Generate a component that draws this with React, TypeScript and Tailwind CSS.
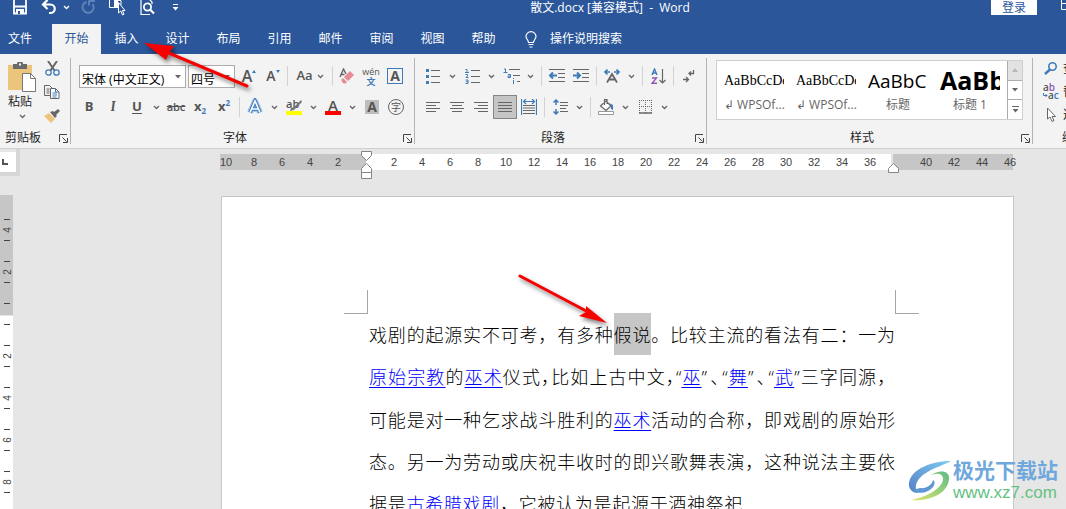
import type { ReactNode } from 'react';
import clsx from 'clsx';

const GRAY = '#666666';
const BLUE = '#3f7ab8';

/* ---------- small shared pieces ---------- */

function Svg({ w = 16, h = 16, children }: { w?: number; h?: number; children: ReactNode }) {
  return (
    <svg width={w} height={h} viewBox={`0 0 ${w} ${h}`} fill="none" stroke={GRAY} className="shrink-0" aria-hidden="true">
      {children}
    </svg>
  );
}

function Chevron({ color = '#666666' }: { color?: string }) {
  return (
    <Svg w={7} h={5}>
      <path d="M1 1l2.5 2.5L6 1" stroke={color} strokeWidth="1.3" />
    </Svg>
  );
}

function Tool({ label, className, children }: { label: string; className?: string; children: ReactNode }) {
  return (
    <button type="button" aria-label={label} className={clsx('flex h-6 shrink-0 items-center justify-center', className ?? 'w-6')}>
      {children}
    </button>
  );
}

function Drop({ label }: { label: string }) {
  return (
    <Tool label={label} className="w-[15px]">
      <Chevron />
    </Tool>
  );
}

function Sep({ tight = false }: { tight?: boolean }) {
  return <span className={clsx('h-5 w-px shrink-0 bg-[#d2d2d2]', tight ? 'mx-[2px]' : 'mx-[3px]')} />;
}

function Launcher({ label }: { label: string }) {
  return (
    <button type="button" aria-label={label} className="flex h-4 w-4 items-center justify-center">
      <Svg w={9} h={9}>
        <path d="M.5 8V.5H8M3.500 3.500l4 4M8.500 4v4.500H4" stroke="#444" />
      </Svg>
    </button>
  );
}

function Group({ title, className, children }: { title: string; className: string; children: ReactNode }) {
  return (
    <section className={clsx('relative flex flex-col', className)}>
      <div className="h-[75px] pt-[10px]">{children}</div>
      <div className="flex h-[18px] items-center">
        <h2 className="flex-1 text-center text-xs">{title}</h2>
        <Launcher label={`${title}设置`} />
      </div>
      <span className="absolute top-1 right-0 h-[86px] w-px bg-[#b4b4b4]" />
    </section>
  );
}

/* ---------- title bar ---------- */

function TitleBar() {
  return (
    <header className="flex h-6 items-start overflow-hidden text-xs text-white">
      <div className="flex h-[14px] items-center pl-2">
        <Tool label="保存">
          <Svg w={14} h={15}>
            <path d="M1 0v13.500h12V0M1 6.500h12" stroke="#fff" strokeWidth="1.800" />
            <path d="M3 9h8v5H3z" fill="#fff" stroke="none" />
            <path d="M5 11h2v3H5z" fill="#2b579a" stroke="none" />
          </Svg>
        </Tool>
        <Tool label="撤消" className="ml-[5px] w-6">
          <Svg w={16} h={15}>
            <path d="M2 4.500h7.500a4 4 0 010 8.500H8M6.500 0L2 4.500 6.500 9" stroke="#fff" strokeWidth="2.200" />
          </Svg>
        </Tool>
        <Tool label="撤消列表" className="w-[11px]">
          <Chevron color="#fff" />
        </Tool>
        <Tool label="恢复" className="w-8">
          <Svg w={15} h={15}>
            <path d="M5.500 2A5.500 5.500 0 1011.500 4M8 .5v5M8 1h6" stroke="#5f82b8" strokeWidth="2" />
          </Svg>
        </Tool>
        <Tool label="触摸/鼠标模式" className="w-[27px]">
          <Svg w={17} h={17}>
            <path d="M.5 0v8.500H5M5 1.500h7V6" stroke="#fff" />
            <path d="M5 2h4v7H5z" fill="#fff" stroke="none" />
            <path d="M9.500 3.500V14l2.300-2 1.700 4 1.500-.7-1.600-3.800H16z" fill="#2b579a" stroke="#fff" />
          </Svg>
        </Tool>
        <Tool label="打印预览" className="w-8">
          <Svg w={15} h={17}>
            <path d="M1 0v15.500h9M9 0l3 3v2" stroke="#fff" strokeWidth="1.200" />
            <circle cx="7.500" cy="8" r="3.600" stroke="#fff" strokeWidth="1.800" />
            <path d="M10 10.500l4 4" stroke="#fff" strokeWidth="2.200" />
          </Svg>
        </Tool>
        <Tool label="自定义快速访问工具栏">
          <Svg w={7} h={7}>
            <path d="M1 .5h5" stroke="#fff" />
            <path d="M.5 3h6l-3 3.500z" fill="#fff" stroke="none" />
          </Svg>
        </Tool>
      </div>
      <h1 className="flex-1 pl-[42px] text-center leading-4 whitespace-pre">散文.docx [兼容模式]  -  Word</h1>
      <button type="button" className="mr-6 h-[15px] w-[46px] shrink-0 bg-white leading-3 text-[#2b579a]">
        登录
      </button>
      <div className="w-[5px] overflow-hidden">
        <svg width="12" height="10" fill="none" stroke="#fff" aria-hidden="true">
          <path d="M.5 0v9.500H12M0 3.500h12" />
        </svg>
      </div>
    </header>
  );
}

/* ---------- tabs ---------- */

const tabs = ['插入', '设计', '布局', '引用', '邮件', '审阅', '视图', '帮助'];

function Tabs() {
  return (
    <nav className="flex h-[30px] items-stretch text-xs text-white">
      <button type="button" className="w-[52px] pl-2 text-left">文件</button>
      <button type="button" aria-current="page" className="w-[49px] bg-[#f3f3f3] text-[#2b579a]">开始</button>
      {tabs.map((tab) => (
        <button key={tab} type="button" className="w-[51px]">{tab}</button>
      ))}
      <button type="button" className="ml-4 flex items-center gap-[13px]">
        <Svg w={12} h={17}>
          <path d="M3.500 11.500C3.500 9 1 8 1 5.500a5 4.800 0 0110 0C11 8 8.500 9 8.500 11.500zM3.500 13.500h5M4.500 16h3" stroke="#fff" strokeWidth="1.200" />
        </Svg>
        操作说明搜索
      </button>
    </nav>
  );
}

/* ---------- ribbon groups ---------- */

function Clipboard() {
  return (
    <section className="relative flex w-[71px] shrink-0 flex-col">
      <div className="flex h-[75px]">
        <button type="button" className="flex w-10 flex-col items-center pt-2 text-xs">
          <span className="pl-1">
            <Svg w={28} h={30}>
              <path d="M0 3h24v25H0z" fill="#ecc57d" stroke="none" />
              <path d="M5 2h4a3 3 0 016 0h4v5H5z" fill="#6a6a6a" stroke="none" />
              <path d="M11 1.500h2v2h-2z" fill="#f3f3f3" stroke="none" />
              <path d="M14.500 11.500h8l5 5v13h-13z" fill="#fff" stroke="#777" />
              <path d="M22.500 11.500v5h5" stroke="#777" />
            </Svg>
          </span>
          <span className="mt-[2px] mb-1 leading-4">粘贴</span>
          <span className="pl-1"><Chevron /></span>
        </button>
        <div className="flex flex-col pt-[2px]">
          <Tool label="剪切">
            <Svg w={15} h={15}>
              <path d="M3 0l6.500 9.500M12 0L5.500 9.500" strokeWidth="2" />
              <circle cx="3.500" cy="11.500" r="2.700" stroke={BLUE} strokeWidth="1.300" />
              <circle cx="11.500" cy="11.500" r="2.700" stroke={BLUE} strokeWidth="1.300" />
            </Svg>
          </Tool>
          <Tool label="复制">
            <Svg w={16} h={14}>
              <path d="M6 10.500H.5V.5h5l3 3M2.500 4h3M2.500 6h3M2.500 8h3" />
              <path d="M6.500 3.500h5l3.500 3.500v6.500H6.500z" fill="#fff" />
              <path d="M11.500 3.500V7H15M8.500 8h4.500M8.500 10h4.500M8.500 12h4" stroke={BLUE} />
            </Svg>
          </Tool>
          <Tool label="格式刷">
            <Svg w={16} h={14}>
              <path d="M0 7l5-3 6 6-4 4z" fill="#ecc57d" stroke="none" />
              <path d="M6 3l3-1 1 1 4-3 2 2-4 4 1 1-2 2z" fill="#666" stroke="none" />
            </Svg>
          </Tool>
        </div>
      </div>
      <div className="flex h-[18px] items-center justify-between pl-[5px]">
        <h2 className="text-xs">剪贴板</h2>
        <Launcher label="剪贴板设置" />
      </div>
      <span className="absolute top-1 right-0 h-[86px] w-px bg-[#b4b4b4]" />
    </section>
  );
}

function Picker({ label, value, className }: { label: string; value: string; className: string }) {
  return (
    <div className={clsx('relative h-[23px] border border-[#ababab] bg-white', className)}>
      <select aria-label={label} className="h-full w-full appearance-none pl-[2px] text-xs outline-none">
        <option>{value}</option>
      </select>
      <svg width="6" height="4" className="pointer-events-none absolute top-[9px] right-1" aria-hidden="true">
        <path d="M0 0h6L3 3.500z" fill="#666" />
      </svg>
    </div>
  );
}

function FontGroup() {
  return (
    <Group title="字体" className="w-[344px] shrink-0">
      <div className="flex items-center pl-2 text-[#555]">
        <Picker label="字体" value="宋体 (中文正文)" className="w-[107px] text-black" />
        <Picker label="字号" value="四号" className="mr-[2px] ml-[2px] w-[47px] text-black" />
        <Tool label="增大字号">
          <span className="text-base leading-4 font-semibold">A</span>
          <Svg w={4} h={14}>
            <path d="M0 4l2-3 2 3z" fill={BLUE} stroke="none" />
          </Svg>
        </Tool>
        <Tool label="减小字号">
          <span className="text-sm leading-4 font-semibold">A</span>
          <Svg w={4} h={14}>
            <path d="M0 1h4L2 4z" fill={BLUE} stroke="none" />
          </Svg>
        </Tool>
        <Sep tight />
        <Tool label="更改大小写" className="w-10 gap-1">
          <span className="text-[13px] font-semibold">Aa</span>
          <Chevron />
        </Tool>
        <Sep tight />
        <Tool label="清除所有格式">
          <Svg w={16} h={16}>
            <path d="M1 9l3.500-8L7 6M2 6.500h3.500" strokeWidth="1.400" />
            <path d="M5 9l6-6 4 4-6 6z" fill="#e88a94" stroke="none" />
            <path d="M4 10l4 4-1.500 1.500h-2L2.500 13v-1.500z" fill="#e88a94" stroke="none" />
          </Svg>
        </Tool>
        <Tool label="拼音指南" className="w-6 flex-col">
          <span className="text-[9px] leading-3">wén</span>
          <span className="text-[9px] leading-2 font-bold text-[#3f7ab8]">文</span>
        </Tool>
        <Tool label="字符边框">
          <span className="flex h-4 w-4 items-center justify-center border border-[#3f7ab8] text-sm leading-4 font-bold">A</span>
        </Tool>
      </div>
      <div className="mt-[7px] flex items-center pl-[6px] text-[13px] text-[#555]">
        <Tool label="加粗"><b>B</b></Tool>
        <Tool label="倾斜"><i className="font-serif font-bold">I</i></Tool>
        <Tool label="下划线"><span className="font-bold underline underline-offset-2">U</span></Tool>
        <Drop label="下划线样式" />
        <Tool label="删除线"><span className="text-[11px] font-semibold line-through">abc</span></Tool>
        <Tool label="下标">
          <b>x</b>
          <span className="mt-2 text-[8px] font-bold text-[#3f7ab8]">2</span>
        </Tool>
        <Tool label="上标">
          <b>x</b>
          <span className="mb-2 text-[8px] font-bold text-[#3f7ab8]">2</span>
        </Tool>
        <Sep />
        <Tool label="文本效果">
          <Svg w={18} h={18}>
            <path d="M4 14.500L9 3l5 11.500M5.500 11h7" stroke="#a9c8ea" strokeWidth="6" strokeLinejoin="round" />
            <path d="M4 14.500L9 3l5 11.500M5.500 11h7" stroke={BLUE} strokeWidth="3.600" />
            <path d="M4 14.500L9 3l5 11.500M5.500 11h7" stroke="#fff" strokeWidth="1.600" />
          </Svg>
        </Tool>
        <Drop label="文本效果选项" />
        <Tool label="突出显示">
          <svg width="18" height="17" aria-hidden="true">
            <text x="1" y="9" fontSize="11" fontWeight="600" fill="#555">ab</text>
            <path d="M16 1L9 8l-3 1-1 3 4-1 8-8z" fill="#777" />
            <path d="M1 12h16v4H1z" fill="#ffff00" />
          </svg>
        </Tool>
        <Drop label="突出显示颜色" />
        <Tool label="字体颜色">
          <svg width="16" height="17" aria-hidden="true">
            <text x="8" y="12" textAnchor="middle" fontSize="15" fontWeight="600" fill="#555">A</text>
            <path d="M0 12h16v4H0z" fill="#ff0000" />
          </svg>
        </Tool>
        <Drop label="字体颜色选项" />
        <Tool label="字符底纹">
          <span className="h-[14px] w-[14px] bg-[#bdbdbd] text-sm leading-[14px] font-bold">A</span>
        </Tool>
        <Tool label="带圈字符">
          <span className="flex h-4 w-4 items-center justify-center rounded-full border border-[#666] text-[10px]">字</span>
        </Tool>
      </div>
    </Group>
  );
}

// horizontal strokes of an alignment icon, one [x1, x2] pair per line
function Align({ label, lines, pressed }: { label: string; lines: number[][]; pressed?: boolean }) {
  return (
    <button
      type="button"
      aria-label={label}
      aria-pressed={pressed}
      className={clsx('flex h-6 w-6 shrink-0 items-center justify-center', pressed && 'border border-[#858585] bg-[#c5c5c5]')}
    >
      <Svg w={14} h={10}>
        {lines.map(([a, b], i) => (
          <path key={i} d={`M${a} ${i * 3 + 0.5}H${b}`} />
        ))}
      </Svg>
    </button>
  );
}

function ParagraphGroup() {
  return (
    <Group title="段落" className="w-[292px] shrink-0">
      <div className="flex items-center pl-[6px]">
        <Tool label="项目符号">
          <Svg w={14} h={16}>
            <path d="M5 2.500h9M5 8.500h9M5 14.500h9" />
            <path d="M0 1h3v3H0zM0 7h3v3H0zM0 13h3v3H0z" fill={BLUE} stroke="none" />
          </Svg>
        </Tool>
        <Drop label="项目符号库" />
        <Tool label="编号">
          <Svg w={15} h={16}>
            <path d="M6 2.500h9M6 8.500h9M6 14.500h9" />
            <path d="M.5 1.500H2V4M0 4.500h4M.5 6.500h2v1.500L1 9.500h2.500M.5 12h2.500v3.500H.5M1 13.700h2" stroke={BLUE} />
          </Svg>
        </Tool>
        <Drop label="编号库" />
        <Tool label="多级列表">
          <Svg w={17} h={16}>
            <path d="M6 1.500h11M10 7.500h7M14 13.500h3" />
            <path d="M1 1h1.500v3M.5 4.500h4M5 6.500h2.500V9.500H5V8h2M10.500 10v1M10.500 12v4" stroke={BLUE} />
          </Svg>
        </Tool>
        <Drop label="多级列表库" />
        <Sep />
        <Tool label="减少缩进量">
          <Svg w={16} h={14}>
            <path d="M0 .5h16M9 4.500h7M9 8.500h7M0 12.500h16" />
            <path d="M1 6.500h7M4 3.500l-3 3 3 3" stroke={BLUE} strokeWidth="2" />
          </Svg>
        </Tool>
        <Tool label="增加缩进量">
          <Svg w={16} h={14}>
            <path d="M0 .5h16M9 4.500h7M9 8.500h7M0 12.500h16" />
            <path d="M0 6.500h7M4 3.500l3 3-3 3" stroke={BLUE} strokeWidth="2" />
          </Svg>
        </Tool>
        <Sep />
        <Tool label="中文版式">
          <Svg w={16} h={14}>
            <path d="M3 13.500L8 5l5 8.500M5 10.500h6" strokeWidth="1.800" />
            <path d="M1 3h5M3.500 .5L1 3l2.500 2.500M15 3h-5M12.500 .5L15 3l-2.500 2.500" stroke={BLUE} strokeWidth="1.600" />
          </Svg>
        </Tool>
        <Drop label="中文版式选项" />
        <Sep />
        <Tool label="排序">
          <Svg w={15} h={17}>
            <path d="M1 7l2.500-6L6 7M2 5h3" stroke={BLUE} strokeWidth="1.400" />
            <path d="M1 10h4.500L1 15.300h5" stroke="#8f56b5" strokeWidth="1.400" />
            <path d="M11.500 1v14M8.500 12l3 3 3-3" strokeWidth="1.200" />
          </Svg>
        </Tool>
        <Sep />
        <Tool label="显示编辑标记">
          <Svg w={12} h={13}>
            <path d="M10.500 0v3.500H6M8 1.500l-2 2 2 2M0 9.500h5M3 7l2.500 2.500L3 12" strokeWidth="1.300" />
          </Svg>
        </Tool>
      </div>
      <div className="mt-[7px] flex items-center pl-[6px]">
        <Align label="左对齐" lines={[[0, 14], [0, 10], [0, 14], [0, 10]]} />
        <Align label="居中" lines={[[0, 14], [2, 12], [0, 14], [2, 12]]} />
        <Align label="右对齐" lines={[[0, 14], [4, 14], [0, 14], [4, 14]]} />
        <Align label="两端对齐" lines={[[0, 14], [0, 14], [0, 14], [0, 14]]} pressed />
        <Tool label="分散对齐">
          <Svg w={16} h={16}>
            <path d="M.5 0v16M15.500 0v16M2.500 2.500h11M5 0L2.500 2.500 5 5M11 0l2.500 2.500L11 5" stroke={BLUE} strokeWidth="1.200" />
            <path d="M2 6.500h12M2 9h12M2 11.500h12M2 14.500h12" />
          </Svg>
        </Tool>
        <Sep />
        <Tool label="行距">
          <Svg w={15} h={16}>
            <path d="M7 3.500h8M7 6.500h8M7 9.500h6M7 12.500h8" />
            <path d="M3 1v5M.5 3.500L3 1l2.500 2.500M3 15v-5M.5 12.500L3 15l2.500-2.500" stroke={BLUE} strokeWidth="1.500" />
          </Svg>
        </Tool>
        <Drop label="行距选项" />
        <Sep />
        <Tool label="底纹">
          <Svg w={16} h={16}>
            <path d="M2.500 7L8 2l5 5-5 4.500zM6.500 6V.5H9V5" fill="#fff" strokeWidth="1.200" />
            <path d="M11 4l4 2v5l-2-1V7z" fill={BLUE} stroke="none" />
            <path d="M.5 12.500h15v3H.5z" fill="#fff" stroke="#999" />
          </Svg>
        </Tool>
        <Drop label="底纹颜色" />
        <Tool label="边框">
          <Svg w={13} h={14}>
            <path d="M.5 0v13M12.500 0v13M6.500 0v13M0 .5h13M0 6.500h13" strokeDasharray="1 1" />
            <path d="M0 13h13" strokeWidth="1.500" />
          </Svg>
        </Tool>
        <Drop label="边框样式" />
      </div>
    </Group>
  );
}

const styleItems = [
  { sample: 'AaBbCcDd', name: '↲ WPSOf...', look: 'font-["Liberation_Serif"] text-sm' },
  { sample: 'AaBbCcDd', name: '↲ WPSOf...', look: 'font-["Liberation_Serif"] text-sm' },
  { sample: 'AaBbC', name: '标题', look: 'text-[19px]' },
  { sample: 'AaBb', name: '标题 1', look: 'text-[25px] font-bold' },
];

function StylesGroup() {
  return (
    <Group title="样式" className="min-w-0 flex-1">
      <div className="mt-[-4px] mr-[10px] ml-[9px] flex h-[60px] border border-[#cfcfcf] bg-white">
        <div className="flex min-w-0 flex-1 overflow-hidden pl-[7px]">
          {styleItems.map((item, i) => (
            <button key={i} type="button" className="mr-3 flex w-[60px] shrink-0 flex-col text-black">
              <span className={clsx('flex h-9 w-full items-center overflow-hidden pt-1 whitespace-nowrap', item.look)}>{item.sample}</span>
              <span className="w-full text-center text-xs leading-4 whitespace-nowrap text-[#666]">{item.name}</span>
            </button>
          ))}
        </div>
        <div className="flex w-[15px] flex-col divide-y divide-[#ababab] border-l border-[#ababab]">
          <button type="button" aria-label="上一行" className="flex flex-1 items-center justify-center bg-[#e2e2e2]">
            <Svg w={6} h={4}><path d="M0 4h6L3 0z" fill="#b8b8b8" stroke="none" /></Svg>
          </button>
          <button type="button" aria-label="下一行" className="flex flex-1 items-center justify-center">
            <Svg w={6} h={4}><path d="M0 0h6L3 3.500z" fill="#666" stroke="none" /></Svg>
          </button>
          <button type="button" aria-label="其他" className="flex flex-1 items-center justify-center">
            <Svg w={7} h={7}>
              <path d="M0 .5h7" />
              <path d="M.5 3h6l-3 3.500z" fill="#666" stroke="none" />
            </Svg>
          </button>
        </div>
      </div>
    </Group>
  );
}

function EditGroup() {
  return (
    <section className="flex w-[33px] shrink-0 flex-col overflow-hidden text-xs whitespace-nowrap">
      <div className="flex h-[75px] flex-col items-start pt-[3px] pl-[10px]">
        <button type="button" className="flex h-[23px] items-center gap-1">
          <Svg w={16} h={13}>
            <circle cx="9.500" cy="4.500" r="3.700" stroke={BLUE} strokeWidth="1.600" />
            <path d="M7 7.500L2 12" stroke={BLUE} strokeWidth="2.400" />
          </Svg>
          查找
        </button>
        <button type="button" className="flex h-[23px] items-center gap-1">
          <svg width="16" height="17" fontSize="10" fontWeight="600" aria-hidden="true">
            <text x="0" y="8" fill="#555">a<tspan fill="#8f56b5">b</tspan></text>
            <text x="5" y="16" fill="#555">a<tspan fill="#3f7ab8">c</tspan></text>
            <path d="M.5 10v2.500H4M2.500 11l1.500 1.500L2.500 14" fill="none" stroke="#3f7ab8" />
          </svg>
          替换
        </button>
        <button type="button" className="flex h-[23px] items-center gap-1">
          <Svg w={16} h={15}>
            <path d="M4.500 1v11l2.500-2 2 4.500 2-1-2-4h3.500z" fill="#fff" />
          </Svg>
          选择
        </button>
      </div>
      <h2 className="pl-[29px] leading-[18px]">编辑</h2>
    </section>
  );
}

/* ---------- rulers ---------- */

function Ticks({ values }: { values: number[] }) {
  return (
    <>
      {values.map((n) => (
        <span key={n} className="w-7 shrink-0 text-center">{n}</span>
      ))}
    </>
  );
}

const bodyTicks = Array.from({ length: 18 }, (_, i) => (i + 1) * 2);

function HorizontalRuler() {
  return (
    <div className="relative flex h-4 font-['Liberation_Sans'] text-[11px] leading-4 text-[#444]">
      <div className="flex w-[146px] shrink-0 justify-end bg-[#c6c6c6] pr-[14px]">
        <Ticks values={[10, 8, 6, 4, 2]} />
      </div>
      <div className="flex min-w-0 flex-1 overflow-hidden bg-white pl-[14px]">
        <Ticks values={bodyTicks} />
      </div>
      <div className="ml-[2px] flex w-[120px] shrink-0 bg-[#c6c6c6] pl-[19px]">
        <Ticks values={[40, 42, 44, 46]} />
      </div>
      {/* indent markers sit over the ruler */}
      <svg width="11" height="28" className="absolute top-[-3px] left-[141px]" fill="#fff" stroke="#858585" aria-hidden="true">
        <path d="M.5.500h10v4l-5 5-5-5zM.5 21.500v-4l5-5 5 5v4zM.5 21.500h10v6H.5z" />
      </svg>
      <svg width="11" height="10" className="absolute top-[9px] right-[114px]" fill="#fff" stroke="#858585" aria-hidden="true">
        <path d="M.5 9.500v-4l5-5 5 5v4z" />
      </svg>
    </div>
  );
}

function VTicks({ values }: { values: string[] }) {
  return (
    <>
      {values.map((n, i) => (
        <span key={i} className="flex h-[21px] shrink-0 flex-col items-center">
          <span className="flex flex-1 -rotate-90 items-center">{n}</span>
          <span className="h-px w-[6px] bg-[#444]" />
        </span>
      ))}
    </>
  );
}

function VerticalRuler() {
  return (
    <aside className="flex w-[20px] shrink-0 flex-col font-['Liberation_Sans'] text-[10px] text-[#444]">
      <div className="h-[27px] border-r-4 border-b-4 border-[#d6d6d6] pt-[3px]">
        <button type="button" aria-label="制表符" className="flex h-5 w-4 items-center bg-white pl-[2px]">
          <Svg w={6} h={6}><path d="M1 0v5h5" stroke="#555" strokeWidth="2" /></Svg>
        </button>
      </div>
      <div className="mt-[19px] flex h-[120px] w-[13px] shrink-0 flex-col bg-[#c6c6c6] pt-1">
        <VTicks values={['', '4', '', '2', '']} />
      </div>
      <div className="mt-px flex min-h-0 w-[13px] flex-1 flex-col items-stretch overflow-hidden bg-white">
        <span className="mx-auto mt-2 h-px w-[6px] shrink-0 bg-[#444]" />
        <VTicks values={['', '2', '', '4', '', '6', '', '8', '']} />
      </div>
    </aside>
  );
}

/* ---------- document ---------- */

function Ref({ children }: { children: ReactNode }) {
  return <a href="#" className="text-[#0000ff] underline underline-offset-3">{children}</a>;
}

// punctuation set in its half-width form
function Half({ className, children }: { className?: string; children: ReactNode }) {
  return <span className={clsx("[font-feature-settings:'halt']", className)}>{children}</span>;
}

function Quoted({ children }: { children: ReactNode }) {
  return (
    <>
      <span className="font-['Open_Sans']">“</span>
      <Ref>{children}</Ref>
      <span className="font-['Open_Sans']">”</span>
    </>
  );
}

function Page() {
  return (
    <article className="flex-1 overflow-hidden border border-b-0 border-[#c6c6c6] bg-white pt-[93px]">
      <div className="flex h-6 justify-between pr-[94px] pl-[122px]">
        <span className="w-6 border-r border-b border-[#a6a6a6]" />
        <span className="w-6 border-b border-l border-[#a6a6a6]" />
      </div>
      <div className="-mt-px pr-[118px] pl-[147px] font-['Noto_Sans_CJK_SC',sans-serif] text-lg leading-[42px] font-light whitespace-nowrap text-black [text-align-last:justify]">
        <p>
          戏剧的起源实不可考，有多种<mark className="bg-[#c6c6c6] py-2 text-black">假说</mark>。比较主流的看法有二：一为
        </p>
        <p>
          <Ref>原始宗教</Ref>的<Ref>巫术</Ref>仪式<Half>，</Half>比如上古中文<Half>，</Half>
          <Quoted>巫</Quoted><Half className="mx-[2px]">、</Half><Quoted>舞</Quoted><Half className="mx-[2px]">、</Half><Quoted>武</Quoted>三字同源，
        </p>
        <p>可能是对一种乞求战斗胜利的<Ref>巫术</Ref>活动的合称，即戏剧的原始形</p>
        <p>态。另一为劳动或庆祝丰收时的即兴歌舞表演，这种说法主要依</p>
        <p className="w-[71%]">据是<Ref>古希腊戏剧</Ref>，它被认为是起源于酒神祭祀</p>
      </div>
    </article>
  );
}

function Watermark() {
  return (
    <div className="absolute right-2 bottom-[6px] flex items-center font-['Liberation_Sans','Noto_Sans_CJK_SC',sans-serif]">
      <svg width="45" height="42" viewBox="0 0 45 42" aria-hidden="true">
        <defs>
          <linearGradient id="swirl-blue" x1="0" y1="1" x2="1" y2="0">
            <stop offset="0" stopColor="#5680c4" />
            <stop offset="1" stopColor="#7ccbf0" />
          </linearGradient>
          <linearGradient id="swirl-green" x1="0" y1="1" x2="1" y2="0">
            <stop offset="0" stopColor="#e2e66e" />
            <stop offset="1" stopColor="#5dbb84" />
          </linearGradient>
        </defs>
        <path d="M43 1C26 1 3 8 1 23c-1 5 3 10 9 10-5-6-1-15 8-20C25 8 36 5 43 1z" fill="url(#swirl-blue)" />
        <path d="M5 30c5 5 15 3 20-3 2-3 2-6 0-7-1 5-7 9-13 8z" fill="#5f97d2" />
        <path d="M21 17c6-5 14-4 14 2 0 8-13 17-32 21 17 2 37-6 38-21 1-9-11-10-20-2z" fill="url(#swirl-green)" />
      </svg>
      <div className="flex flex-col">
        <span className="text-[21px] leading-6 font-bold text-[#6fa8dc]">极光下载站</span>
        <span className="text-[17px] leading-5 text-[#65c182]">www.xz7.com</span>
      </div>
    </div>
  );
}

function Arrow({ className, w, h, shaft, head }: { className: string; w: number; h: number; shaft: string; head: string }) {
  return (
    <svg width={w} height={h} className={clsx('pointer-events-none absolute overflow-visible drop-shadow-[2px_3px_2px_rgba(0,0,0,0.5)]', className)} aria-hidden="true">
      <path d={shaft} stroke="#f60000" strokeWidth="3" strokeLinecap="round" />
      <path d={head} fill="#f60000" />
    </svg>
  );
}

export default function App() {
  return (
    <div className="relative flex h-screen flex-col overflow-hidden bg-[#e6e6e6] font-['Open_Sans','Noto_Sans_CJK_SC',sans-serif] text-[#262626]">
      <div className="bg-[#2b579a]">
        <TitleBar />
        <Tabs />
      </div>

      <div className="flex h-[95px] shrink-0 border-b border-[#d0d0d0] bg-[#f3f3f3]">
        <Clipboard />
        <FontGroup />
        <ParagraphGroup />
        <StylesGroup />
        <EditGroup />
      </div>

      <main className="flex min-h-0 flex-1">
        <VerticalRuler />
        <div className="flex min-w-0 flex-1 flex-col pt-[5px] pr-[53px] pl-[200px]">
          <HorizontalRuler />
          <div className="mt-[26px] -mr-px flex min-h-0 flex-1 pl-px">
            <Page />
          </div>
        </div>
      </main>

      <Arrow className="top-[42px] left-[144px]" w={106} h={48} shaft="M20 9L103 44" head="M0 1L30 4 25 11 22 18z" />
      <Arrow className="top-[274px] left-[518px]" w={90} h={52} shaft="M2 2L72 39" head="M89 49L68 32 68 38 61 42z" />
      <Watermark />
    </div>
  );
}
